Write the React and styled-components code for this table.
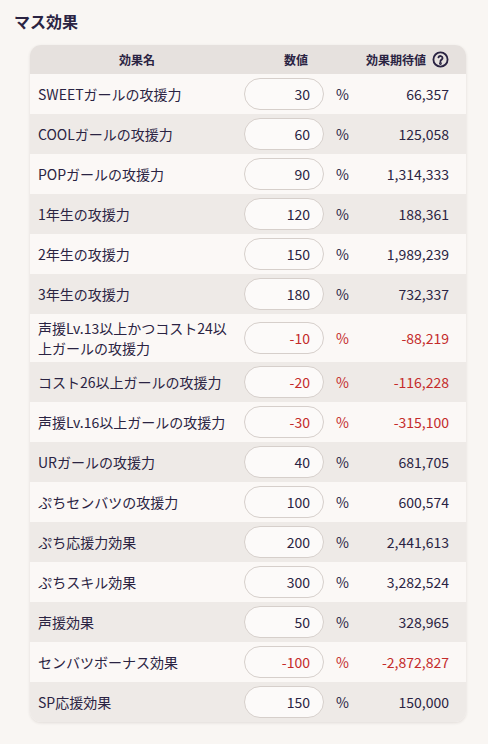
import React from "react";
import styled, { createGlobalStyle } from "styled-components";

const Global = createGlobalStyle`
  html, body { margin: 0; padding: 0; background: #f9f6f3; }
  body { font-family: "Noto Sans CJK JP", "Noto Sans", sans-serif; color: #2a2342; }
`;

const Page = styled.div`
  padding: 9px 22px 20px 14px;
`;

const Title = styled.h2`
  margin: 0 0 12px 0;
  font-size: 16px;
  font-weight: 700;
  line-height: 24px;
  color: #2a2342;
`;

const Card = styled.div`
  margin-left: 16px;
  border-radius: 11px;
  overflow: hidden;
  background: #fbf8f6;
  box-shadow: 0 1px 3px rgba(60, 40, 30, 0.12);
`;

const Grid = styled.div`
  display: grid;
  grid-template-columns: 214px 80px 36px 1fr;
  align-items: center;
  padding-right: 17px;
`;

const HeaderRow = styled(Grid)`
  height: 29px;
  background: #e6e1de;
  font-size: 12px;
  font-weight: 700;
`;

const HCell = styled.div`
  grid-column: ${(p) => p.$span || "auto"};
  padding-right: ${(p) => p.$pr || 0}px;
  display: flex;
  align-items: center;
  justify-content: ${(p) =>
    p.$align === "right" ? "flex-end" : p.$align === "center" ? "center" : "flex-start"};
  gap: 6px;
`;

const Row = styled(Grid)`
  min-height: 40px;
  padding-top: 4px;
  padding-bottom: 4px;
  box-sizing: border-box;
  background: ${(p) => (p.$alt ? "#eeeae7" : "#fbf8f6")};
  font-size: 14px;
  line-height: 20px;
  color: ${(p) => (p.$neg ? "#c42b2b" : "#2a2342")};
`;

const Name = styled.div`
  padding: 0 12px 0 8px;
  color: #2a2342;
`;

const Input = styled.div`
  box-sizing: border-box;
  height: 32px;
  width: 80px;
  border: 1px solid #d6cfcb;
  border-radius: 16px;
  background: #fcfaf9;
  text-align: right;
  padding-right: 13px;
  line-height: 30px;
  font-size: 14px;
`;

const Pct = styled.div`
  padding-left: 12px;
`;

const Value = styled.div`
  text-align: right;
`;

const Help = () => (
  <svg width="17" height="17" viewBox="0 0 24 24" fill="none" stroke="#2a2342" strokeWidth="2.6" strokeLinecap="round" strokeLinejoin="round">
    <circle cx="12" cy="12" r="10" />
    <path d="M9.1 9a3 3 0 0 1 5.8 1c0 2-3 2.6-3 4.4" />
    <circle cx="11.9" cy="17.6" r="0.7" fill="#2a2342" />
  </svg>
);

const rows = [
  ["SWEETガールの攻援力", "30", "66,357"],
  ["COOLガールの攻援力", "60", "125,058"],
  ["POPガールの攻援力", "90", "1,314,333"],
  ["1年生の攻援力", "120", "188,361"],
  ["2年生の攻援力", "150", "1,989,239"],
  ["3年生の攻援力", "180", "732,337"],
  ["声援Lv.13以上かつコスト24以上ガールの攻援力", "-10", "-88,219"],
  ["コスト26以上ガールの攻援力", "-20", "-116,228"],
  ["声援Lv.16以上ガールの攻援力", "-30", "-315,100"],
  ["URガールの攻援力", "40", "681,705"],
  ["ぷちセンバツの攻援力", "100", "600,574"],
  ["ぷち応援力効果", "200", "2,441,613"],
  ["ぷちスキル効果", "300", "3,282,524"],
  ["声援効果", "50", "328,965"],
  ["センバツボーナス効果", "-100", "-2,872,827"],
  ["SP応援効果", "150", "150,000"],
];

export default function App() {
  return (
    <>
      <Global />
      <Page>
        <Title>マス効果</Title>
        <Card>
          <HeaderRow>
            <HCell $align="center">効果名</HCell>
            <HCell $align="center" $span="2 / 4" $pr={12}>数値</HCell>
            <HCell $align="right">
              効果期待値
              <Help />
            </HCell>
          </HeaderRow>
          {rows.map(([name, val, exp], i) => {
            const neg = val.startsWith("-");
            return (
              <Row key={name} $alt={i % 2 === 1} $neg={neg}>
                <Name>{name}</Name>
                <Input>{val}</Input>
                <Pct>%</Pct>
                <Value>{exp}</Value>
              </Row>
            );
          })}
        </Card>
      </Page>
    </>
  );
}
